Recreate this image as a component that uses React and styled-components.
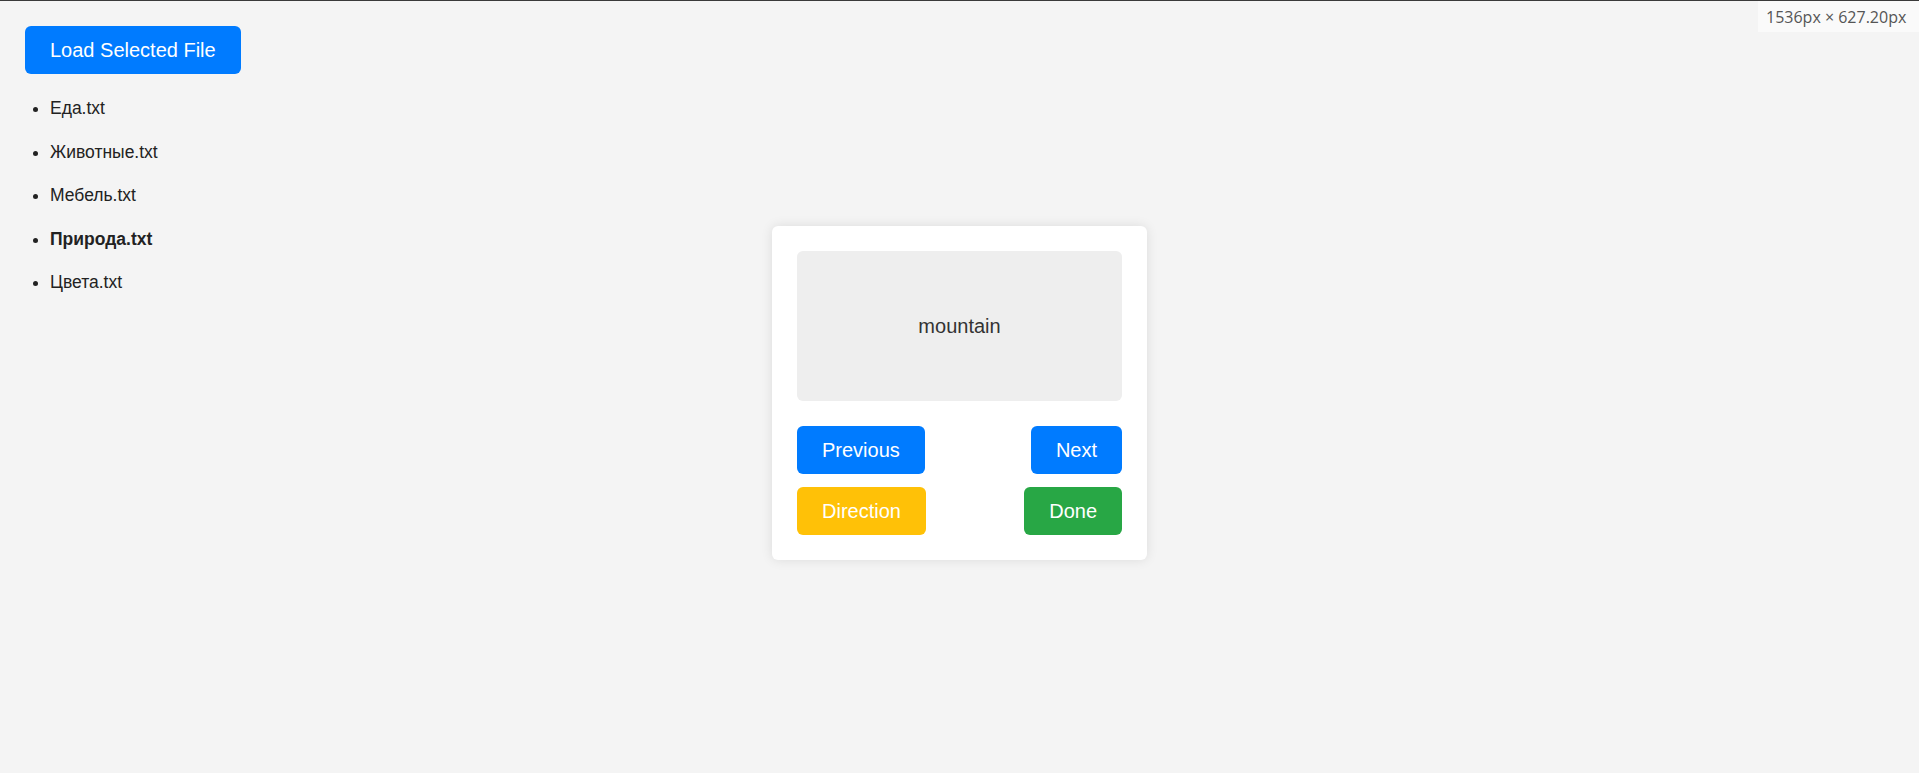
import React, { useState } from "react";
import styled, { createGlobalStyle } from "styled-components";

const files = ["Еда.txt", "Животные.txt", "Мебель.txt", "Природа.txt", "Цвета.txt"];

const GlobalStyle = createGlobalStyle`
  html, body {
    margin: 0;
    padding: 0;
    background: #f4f4f4;
    font-family: "Liberation Sans", Arial, sans-serif;
  }
`;

const Page = styled.div`
  display: grid;
  height: 773px;
  box-sizing: border-box;
  border-top: 1px solid #3a3a3a;
  background: #f4f4f4;
  overflow: hidden;
`;

const Sidebar = styled.div`
  grid-area: 1 / 1;
  align-self: start;
  justify-self: start;
  padding: 25px 25px;
`;

const Button = styled.button`
  border: none;
  border-radius: 6px;
  padding: 0 25px;
  height: ${({ $tall }) => ($tall ? "48px" : "48px")};
  font-family: "Liberation Sans", Arial, sans-serif;
  font-size: 20px;
  color: #fff;
  cursor: pointer;
  background: ${({ $color }) => $color || "#007bff"};
`;

const FileList = styled.ul`
  margin: 24px 0 0;
  padding-left: 25px;
  font-size: 17.5px;
  color: #222;
`;

const FileItem = styled.li`
  line-height: 20px;
  font-weight: ${({ $active }) => ($active ? 700 : 400)};
  cursor: pointer;
  & + & {
    margin-top: 23.5px;
  }
`;

const Center = styled.div`
  grid-area: 1 / 1;
  align-self: center;
  justify-self: center;
  padding-top: 12px;
`;

const Card = styled.div`
  width: 375px;
  box-sizing: border-box;
  padding: 25px;
  background: #fff;
  border-radius: 6px;
  box-shadow: 0 0 12px rgba(0, 0, 0, 0.1);
`;

const Display = styled.div`
  height: 150px;
  display: flex;
  align-items: center;
  justify-content: center;
  background: #eee;
  border-radius: 6px;
  font-size: 20px;
  color: #333;
`;

const Row = styled.div`
  display: flex;
  justify-content: space-between;
  margin-top: ${({ $gap }) => $gap}px;
`;

const SizeTag = styled.div`
  position: absolute;
  top: 1px;
  right: 0;
  width: 161px;
  height: 31px;
  box-sizing: border-box;
  padding-left: 8px;
  display: flex;
  align-items: center;
  background: #fafafa;
  color: #555;
  font-family: "Open Sans", sans-serif;
  font-size: 16px;
`;

export default function App() {
  const [selected, setSelected] = useState("Природа.txt");

  return (
    <>
      <GlobalStyle />
      <Page>
        <Sidebar>
          <Button>Load Selected File</Button>
          <FileList>
            {files.map((name) => (
              <FileItem
                key={name}
                $active={name === selected}
                onClick={() => setSelected(name)}
              >
                {name}
              </FileItem>
            ))}
          </FileList>
        </Sidebar>
        <Center>
          <Card>
            <Display>mountain</Display>
            <Row $gap={25}>
              <Button>Previous</Button>
              <Button>Next</Button>
            </Row>
            <Row $gap={13}>
              <Button $color="#ffc107">Direction</Button>
              <Button $color="#28a745">Done</Button>
            </Row>
          </Card>
        </Center>
      </Page>
      <SizeTag>1536px × 627.20px</SizeTag>
    </>
  );
}
